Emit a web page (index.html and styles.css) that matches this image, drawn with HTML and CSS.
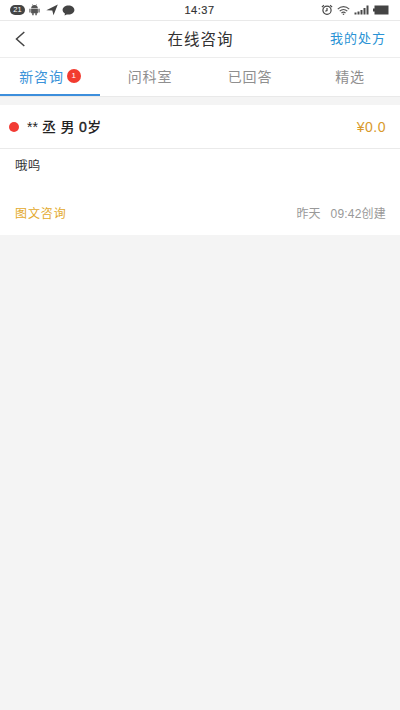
FILE: index.html
```html
<!DOCTYPE html>
<html lang="zh-CN">
<head>
<meta charset="utf-8">
<meta name="viewport" content="width=device-width, initial-scale=1">
<title>在线咨询</title>
<link rel="stylesheet" href="styles.css">
</head>
<body>
<div class="status">
  <div class="status-left">
    <span class="count">21</span>
    <svg class="android" width="11" height="12" viewBox="0 0 12 13" fill="#555"><path d="M2.3 4.700C2.300 3 3.200 2 4.100 1.500L3.400.4l.5-.3.8 1.200a4.500 4.500 0 0 1 2.600 0L8.100.1l.5.3-.7 1.100C8.800 2 9.700 3 9.700 4.700z"/><path d="M2.300 5.200h7.400v4.900H8.500v2.200H6.900v-2.200H5.100v2.200H3.500v-2.200H2.300zM.4 5.200h1.300v3.900H.4zM10.300 5.200h1.300v3.900h-1.300z"/></svg>
    <svg class="arrow" width="12" height="12" viewBox="0 0 12 12"><path d="M.3 6.200 11.800.5 7.500 11.300 6.300 6.400z" fill="#444"/></svg>
    <svg class="bubble" width="13" height="11" viewBox="0 0 13 11"><path d="M6.500.6c3.300 0 5.900 2 5.900 4.500s-2.600 4.500-5.900 4.500c-.6 0-1.200-.1-1.700-.2L2.600 10.500l.3-1.900C1.500 7.800.6 6.500.6 5.100.6 2.600 3.200.6 6.500.6z" fill="#444"/></svg>
  </div>
  <time class="clock">14:37</time>
  <div class="status-right">
    <svg width="12" height="12" viewBox="0 0 12 12" fill="none" stroke="#444" stroke-width="1.200"><circle cx="6" cy="6.300" r="4.100"/><path d="M6 3.900v2.600l-1.700.8M.9 3.100 2.900 1.300M11.100 3.100 9.100 1.300"/></svg>
    <svg class="wifi" width="13" height="11" viewBox="0 0 13 11" fill="none" stroke="#555" stroke-width="1.200"><path d="M.8 4.100c3.300-3.200 8.100-3.200 11.400 0M2.700 6.100c2.200-2.100 5.400-2.100 7.600 0M4.500 8c1.200-1.100 2.800-1.100 4 0"/><circle cx="6.500" cy="9.300" r=".8" fill="#555" stroke="none"/></svg>
    <svg class="signal" width="15" height="10" viewBox="0 0 15 10" fill="#484848"><path d="M.5 7.500h2V9.500h-2zM3.500 6.500h2v3h-2zM6.500 5h2v4.500h-2zM9.500 3h2v6.500h-2zM12.500.5h2v9h-2z"/></svg>
    <svg class="battery" width="16" height="10" viewBox="0 0 16 10" fill="#444"><path d="M1.500.5h14v9h-14zM0 3.500h1.500v3H0z"/></svg>
  </div>
</div>
<header class="nav">
  <svg class="back" width="10" height="16" viewBox="0 0 10 16" fill="none" stroke="#444" stroke-width="1.500"><path d="M9.300 1 1.500 8l7.800 7"/></svg>
  <h1>在线咨询</h1>
  <a class="rx">我的处方</a>
</header>
<nav class="tabs">
  <div class="tab active"><span>新咨询</span><b class="badge">1</b></div>
  <div class="tab">问科室</div>
  <div class="tab">已回答</div>
  <div class="tab">精选</div>
</nav>
<main class="card">
  <div class="head">
    <i class="dot"></i>
    <strong class="patient"><span class="stars">**</span> 丞 男 <span class="age">0</span>岁</strong>
    <span class="price">¥0.0</span>
  </div>
  <p class="message">哦呜</p>
  <div class="foot">
    <span class="type">图文咨询</span>
    <span class="day">昨天</span>
    <span class="created">09:42创建</span>
  </div>
</main>
</body>
</html>
```

FILE: styles.css
```css
* { box-sizing: border-box; }
body {
  margin: 0;
  min-height: 710px;
  background: #f4f4f4;
  color: #333;
  font-family: "Liberation Sans", "Noto Sans CJK SC", sans-serif;
}
svg { display: block; flex: none; }

.status {
  display: grid;
  grid-template-columns: 1fr auto 1fr;
  align-items: center;
  height: 21px;
  padding: 0 11px 0 10px;
  background: #fff;
  border-bottom: 1px solid #e9e9e9;
}
.status-left, .status-right { display: flex; align-items: center; }
.status-right { justify-content: flex-end; }
.count {
  width: 15px;
  height: 10px;
  border-radius: 5px;
  background: #444;
  color: #fff;
  font-size: 7.5px;
  line-height: 10px;
  text-align: center;
}
.android { margin-left: 4px; }
.arrow { margin-left: 6px; }
.bubble { margin-left: 4px; }
.clock { padding-top: 1px; font-size: 11px; letter-spacing: .5px; line-height: 19px; -webkit-text-stroke: .15px #333; }
.wifi { margin-left: 4px; }
.signal { margin-left: 4px; }
.battery { margin-left: 4px; }

.nav {
  display: grid;
  grid-template-columns: 1fr auto 1fr;
  align-items: center;
  height: 37px;
  padding: 0 14px 0 15px;
  background: #fff;
  border-bottom: 1px solid #ededed;
}
.nav h1 { margin: 0; padding-top: 2px; font-size: 15.5px; font-weight: 400; letter-spacing: 1px; line-height: 34px; }
.rx { justify-self: end; color: #2a93d5; font-size: 13px; letter-spacing: 1px; line-height: 36px; }

.tabs {
  display: grid;
  grid-template-columns: repeat(4, 1fr);
  height: 39px;
  background: #fff;
  border-bottom: 1px solid #e9e9e9;
}
.tab {
  display: flex;
  align-items: center;
  justify-content: center;
  height: 38px;
  padding-bottom: 2px;
  color: #8f8f8f;
  font-size: 14px;
  letter-spacing: .8px;
}
.tab.active { color: #3b93d9; border-bottom: 2px solid #3d8fdc; padding-bottom: 0; }
.badge {
  width: 14px;
  height: 14px;
  margin-left: 3px;
  border-radius: 50%;
  background: #f23b2f;
  color: #fff;
  font-size: 8px;
  font-weight: 400;
  letter-spacing: 0;
  line-height: 14px;
  text-align: center;
}

.card { height: 130px; margin-top: 8px; background: #fff; }
.head {
  display: flex;
  align-items: center;
  height: 44px;
  padding: 0 14px 0 9px;
  border-bottom: 1px solid #eaeaea;
}
.dot { width: 10px; height: 10px; border-radius: 50%; background: #f23b34; }
.patient { margin-left: 8px; padding-bottom: 1px; color: #222; font-size: 14px; font-weight: 500; letter-spacing: .3px; }
.stars { letter-spacing: 0; }
.age { -webkit-text-stroke: .4px #222; }
.price { margin-left: auto; color: #d99a2b; font-size: 14px; letter-spacing: .5px; }
.message { margin: 0; padding: 8px 15px 0; font-size: 12.5px; letter-spacing: .3px; line-height: 18px; }
.foot {
  display: flex;
  align-items: center;
  height: 18px;
  margin-top: 30px;
  padding: 0 14px 0 15px;
  color: #999;
  font-size: 12px;
  line-height: 18px;
}
.type { color: #e3a92b; letter-spacing: .9px; }
.day { margin-left: auto; }
.created { margin-left: 10px; letter-spacing: .2px; }
```
